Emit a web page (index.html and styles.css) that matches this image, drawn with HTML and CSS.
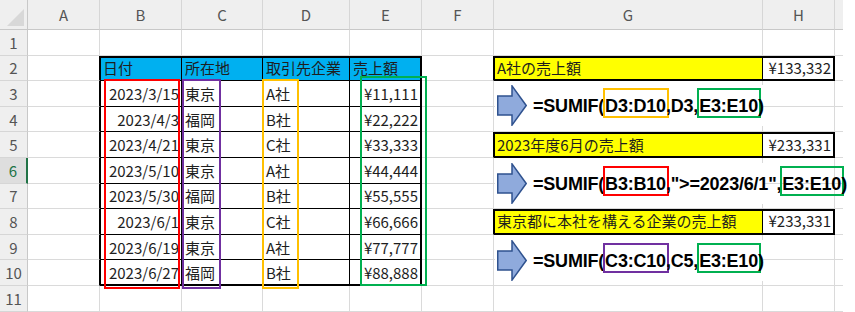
FILE: index.html
```html
<!DOCTYPE html>
<html lang="ja">
<head>
<meta charset="utf-8">
<title>SUMIF</title>
<link rel="stylesheet" href="styles.css">
</head>
<body>
<div class="sheet">
  <div class="grid">
    <!-- column headers -->
    <div class="corner"><span class="tri"></span></div>
    <div class="ch">A</div><div class="ch">B</div><div class="ch">C</div><div class="ch">D</div><div class="ch">E</div><div class="ch">F</div><div class="ch">G</div><div class="ch">H</div><div class="ch last"></div><div class="out"></div>

    <!-- row 1 -->
    <div class="rh">1</div>
    <div class="cell"></div><div class="cell"></div><div class="cell"></div><div class="cell"></div><div class="cell"></div><div class="cell"></div><div class="cell"></div><div class="cell"></div><div class="cell last"></div><div class="out"></div>

    <!-- row 2 -->
    <div class="rh">2</div>
    <div class="cell edge"></div>
    <div class="cell tbl hd lft top">日付</div>
    <div class="cell tbl hd top">所在地</div>
    <div class="cell tbl hd top">取引先企業</div>
    <div class="cell tbl hd rgt top">売上額</div>
    <div class="cell edge"></div>
    <div class="cell tbl yel lft top bot">A社の売上額</div>
    <div class="cell tbl val rgt top bot">¥133,332</div>
    <div class="cell last"></div><div class="out"></div>

    <!-- row 3 -->
    <div class="rh">3</div>
    <div class="cell edge"></div>
    <div class="cell tbl lft num">2023/3/15</div>
    <div class="cell tbl">東京</div>
    <div class="cell tbl">A社</div>
    <div class="cell tbl rgt num">¥11,111</div>
    <div class="cell"></div><div class="cell"></div><div class="cell"></div><div class="cell last"></div><div class="out"></div>

    <!-- row 4 -->
    <div class="rh">4</div>
    <div class="cell edge"></div>
    <div class="cell tbl lft num">2023/4/3</div>
    <div class="cell tbl">福岡</div>
    <div class="cell tbl">B社</div>
    <div class="cell tbl rgt num">¥22,222</div>
    <div class="cell"></div><div class="cell"></div><div class="cell"></div><div class="cell last"></div><div class="out"></div>

    <!-- row 5 -->
    <div class="rh">5</div>
    <div class="cell edge"></div>
    <div class="cell tbl lft num">2023/4/21</div>
    <div class="cell tbl">東京</div>
    <div class="cell tbl">C社</div>
    <div class="cell tbl rgt num">¥33,333</div>
    <div class="cell edge"></div>
    <div class="cell tbl yel lft top bot">2023年度6月の売上額</div>
    <div class="cell tbl val rgt top bot">¥233,331</div>
    <div class="cell last"></div><div class="out"></div>

    <!-- row 6 -->
    <div class="rh sel">6</div>
    <div class="cell edge"></div>
    <div class="cell tbl lft num">2023/5/10</div>
    <div class="cell tbl">東京</div>
    <div class="cell tbl">A社</div>
    <div class="cell tbl rgt num">¥44,444</div>
    <div class="cell"></div><div class="cell"></div><div class="cell"></div><div class="cell last"></div><div class="out"></div>

    <!-- row 7 -->
    <div class="rh">7</div>
    <div class="cell edge"></div>
    <div class="cell tbl lft num">2023/5/30</div>
    <div class="cell tbl">福岡</div>
    <div class="cell tbl">B社</div>
    <div class="cell tbl rgt num">¥55,555</div>
    <div class="cell"></div><div class="cell"></div><div class="cell"></div><div class="cell last"></div><div class="out"></div>

    <!-- row 8 -->
    <div class="rh">8</div>
    <div class="cell edge"></div>
    <div class="cell tbl lft num">2023/6/1</div>
    <div class="cell tbl">東京</div>
    <div class="cell tbl">C社</div>
    <div class="cell tbl rgt num">¥66,666</div>
    <div class="cell edge"></div>
    <div class="cell tbl yel lft top bot">東京都に本社を構える企業の売上額</div>
    <div class="cell tbl val rgt top bot">¥233,331</div>
    <div class="cell last"></div><div class="out"></div>

    <!-- row 9 -->
    <div class="rh">9</div>
    <div class="cell edge"></div>
    <div class="cell tbl lft num">2023/6/19</div>
    <div class="cell tbl">東京</div>
    <div class="cell tbl">A社</div>
    <div class="cell tbl rgt num">¥77,777</div>
    <div class="cell"></div><div class="cell"></div><div class="cell"></div><div class="cell last"></div><div class="out"></div>

    <!-- row 10 -->
    <div class="rh">10</div>
    <div class="cell edge"></div>
    <div class="cell tbl lft bot num">2023/6/27</div>
    <div class="cell tbl bot">福岡</div>
    <div class="cell tbl bot">B社</div>
    <div class="cell tbl rgt bot num">¥88,888</div>
    <div class="cell"></div><div class="cell"></div><div class="cell"></div><div class="cell last"></div><div class="out"></div>

    <!-- row 11 -->
    <div class="rh">11</div>
    <div class="cell"></div><div class="cell"></div><div class="cell"></div><div class="cell"></div><div class="cell"></div><div class="cell"></div><div class="cell"></div><div class="cell"></div><div class="cell last"></div><div class="out"></div>
  </div>

  <!-- range highlight boxes over the table -->
  <div class="box red"></div>
  <div class="box pur"></div>
  <div class="box org"></div>
  <div class="box grn"></div>

  <!-- formula text boxes -->
  <div class="fx fx1">
    <svg class="arrow" width="30" height="41" viewBox="0 0 30 41"><polygon points="0.75,11 15,11 15,0.9 29.2,20.5 15,40.1 15,30 0.75,30"/></svg>
    <span class="code">=SUMIF(<span class="rng c-org">D3:D10</span>,D3,<span class="rng c-grn">E3:E10</span>)</span>
  </div>
  <div class="fx fx2">
    <svg class="arrow" width="30" height="41" viewBox="0 0 30 41"><polygon points="0.75,11 15,11 15,0.9 29.2,20.5 15,40.1 15,30 0.75,30"/></svg>
    <span class="code">=SUMIF(<span class="rng c-red">B3:B10</span>,"&gt;=2023/6/1",<span class="rng c-grn">E3:E10</span>)</span>
  </div>
  <div class="fx fx3">
    <svg class="arrow" width="30" height="41" viewBox="0 0 30 41"><polygon points="0.75,11 15,11 15,0.9 29.2,20.5 15,40.1 15,30 0.75,30"/></svg>
    <span class="code">=SUMIF(<span class="rng c-pur">C3:C10</span>,C5,<span class="rng c-grn">E3:E10</span>)</span>
  </div>
</div>
</body>
</html>
```
FILE: styles.css
```css
html, body {
  margin: 0;
  padding: 0;
  background: #ffffff;
}

.sheet {
  position: relative;
  width: 855px;
  height: 312px;
  overflow: hidden;
  font-family: "Noto Sans CJK JP", "Noto Sans", sans-serif;
}

.grid {
  display: grid;
  grid-template-columns: 28px 72px 82px 81px 87px 72px 72px 269px 72px 8px 12px;
  grid-template-rows: 30px repeat(11, 25.6px);
}

.grid > div {
  box-sizing: border-box;
  min-width: 0;
}

/* headers */
.corner {
  position: relative;
  background: #efefef;
  border-right: 1px solid #c8c8c8;
  border-bottom: 1px solid #c8c8c8;
}
.tri {
  position: absolute;
  right: 3px;
  bottom: 3px;
  width: 17px;
  height: 17px;
  background: #d8d8d8;
  clip-path: polygon(100% 0, 100% 100%, 0 100%);
}

.ch {
  background: #efefef;
  border-right: 1px solid #d6d6d6;
  border-bottom: 1px solid #c8c8c8;
  color: #555555;
  font-size: 15px;
  display: flex;
  align-items: center;
  justify-content: center;
}
.ch.last { border-right: none; }

.rh {
  background: #efefef;
  border-right: 1px solid #c8c8c8;
  border-bottom: 1px solid #d6d6d6;
  color: #555555;
  font-size: 15px;
  display: flex;
  align-items: center;
  justify-content: center;
}
.rh.sel {
  background: #dedede;
  color: #217346;
  border-right: 2px solid #217346;
}

.out {
  background: #ffffff;
}

/* cells */
.cell {
  border-right: 1px solid #dadada;
  border-bottom: 1px solid #dadada;
  font-size: 15px;
  color: #1e1e1e;
  display: flex;
  align-items: center;
  padding: 0 2px 0 3px;
  white-space: nowrap;
}
.cell.last { border-right: none; }
.cell.edge { border-right-color: #000000; }

.tbl {
  border-right-color: #000000;
  border-bottom-color: #000000;
}
.hd { background: #00b0f0; }
.yel { background: #ffff00; }
.val { background: #ffffff; justify-content: flex-end; }
.num { justify-content: flex-end; }

.lft { box-shadow: inset 1px 0 0 #000000; }
.top { box-shadow: inset 0 2px 0 #000000; }
.lft.top { box-shadow: inset 1px 0 0 #000000, inset 0 2px 0 #000000; }
.rgt { border-right-width: 2px; }
.bot { border-bottom-width: 2px; }

/* highlight boxes */
.box {
  position: absolute;
  box-sizing: border-box;
  border: 2px solid;
  height: 210px;
}
.box.red { left: 104px; top: 79px; width: 76px; border-color: #ff0000; }
.box.pur { left: 182px; top: 79px; width: 39px; border-color: #7030a0; }
.box.org { left: 262px; top: 79px; width: 37px; border-color: #ffc000; }
.box.grn { left: 360px; top: 76px; width: 67px; border-color: #00b050; }

/* formula text boxes */
.fx {
  position: absolute;
  left: 495px;
  width: 268px;
  height: 41px;
  box-sizing: border-box;
  padding-left: 2px;
  background: #ffffff;
  display: flex;
  align-items: center;
  gap: 6px;
}
.fx1 { top: 85px; }
.fx2 { top: 163px; }
.fx3 { top: 240px; }

.arrow { flex: none; display: block; }
.arrow polygon {
  fill: #8faadc;
  stroke: #2f528f;
  stroke-width: 1.5;
  stroke-linejoin: miter;
}

.code {
  font-family: "Liberation Sans", Arial, sans-serif;
  font-weight: bold;
  font-size: 18px;
  line-height: 20px;
  letter-spacing: -0.2px;
  color: #000000;
  white-space: nowrap;
}

.rng {
  border: 2px solid;
  padding: 6px 1px 0 0;
  margin: 0 -3px 0 -1px;
}
.c-red { border-color: #ff0000; }
.c-pur { border-color: #7030a0; }
.c-org { border-color: #ffc000; }
.c-grn { border-color: #00b050; }
```
